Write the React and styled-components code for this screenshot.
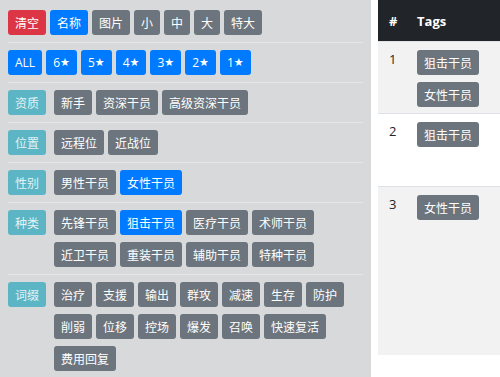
import styled, { createGlobalStyle } from "styled-components"

const GlobalStyle = createGlobalStyle`
    body {
        margin: 0;
        background: #ffffff;
        font-family: "Open Sans", "Noto Sans CJK SC", sans-serif;
    }
`

const filters = [
    { label: null, items: [["清空", "red"], ["名称", "blue"], "图片", "小", "中", "大", "特大"] },
    { label: null, items: [["ALL", "blue"], ["6", "blue", true], ["5", "blue", true], ["4", "blue", true], ["3", "blue", true], ["2", "blue", true], ["1", "blue", true]] },
    { label: "资质", items: ["新手", "资深干员", "高级资深干员"] },
    { label: "位置", items: ["远程位", "近战位"] },
    { label: "性别", items: ["男性干员", ["女性干员", "blue"]] },
    { label: "种类", items: ["先锋干员", ["狙击干员", "blue"], "医疗干员", "术师干员", "近卫干员", "重装干员", "辅助干员", "特种干员"] },
    { label: "词缀", items: ["治疗", "支援", "输出", "群攻", "减速", "生存", "防护", "削弱", "位移", "控场", "爆发", "召唤", "快速复活", "费用回复"] },
]

const results = [
    { id: 1, tags: ["狙击干员", "女性干员"], height: 72, striped: true },
    { id: 2, tags: ["狙击干员"], height: 73, striped: false },
    { id: 3, tags: ["女性干员"], height: 169, striped: true },
]

export default function App() {
    return (
        <>
            <GlobalStyle />
            <Page>
                <Panel>
                    {filters.map((row, i) => (
                        <FilterRow key={i}>
                            {row.label && <Label>{row.label}</Label>}
                            <Buttons>
                                {row.items.map((it) => {
                                    const [text, tone, star] = Array.isArray(it) ? it : [it, "gray"]
                                    return (
                                        <Btn key={text} $tone={tone}>
                                            {text}
                                            {star && <Star>★</Star>}
                                        </Btn>
                                    )
                                })}
                            </Buttons>
                        </FilterRow>
                    ))}
                </Panel>
                <Table>
                    <Head>
                        <NumCell>#</NumCell>
                        <TagCell>Tags</TagCell>
                    </Head>
                    {results.map((r) => (
                        <Row key={r.id} $striped={r.striped} $h={r.height}>
                            <NumCell>{r.id}</NumCell>
                            <TagCell>
                                {r.tags.map((t) => <Btn key={t} $tone="gray">{t}</Btn>)}
                            </TagCell>
                        </Row>
                    ))}
                </Table>
            </Page>
        </>
    )
}

const Page = styled.div`
    display: flex;
    gap: 7px;
    height: 377px;
    overflow: hidden;
`
const Panel = styled.div`
    width: 355px;
    flex: none;
    padding: 3px 8px 0;
    background: #d8d9db;
`
const FilterRow = styled.div`
    display: flex;
    align-items: flex-start;
    gap: 8px;
    padding: 7px 0;
    border-bottom: 1px solid rgba(255, 255, 255, 0.35);
`
const Buttons = styled.div`
    display: flex;
    flex-wrap: wrap;
    gap: 7px 4px;
    flex: 1;
`
const tones = {
    gray: "#6c757d",
    blue: "#007bff",
    red: "#dc3545",
}
const Btn = styled.div`
    display: inline-flex;
    align-items: center;
    justify-content: center;
    height: 25px;
    padding: 0 7px;
    border-radius: 3px;
    background: ${(p) => tones[p.$tone]};
    color: #ffffff;
    font-size: 12px;
    white-space: nowrap;
    box-sizing: border-box;
`
const Star = styled.span`
    font-family: "DejaVu Sans", sans-serif;
    font-size: 11px;
`
const Label = styled(Btn)`
    background: #5bb5c4;
    color: rgba(255, 255, 255, 0.85);
    flex: none;
`
const Table = styled.div`
    flex: 1;
    display: flex;
    flex-direction: column;
    color: #212529;
    font-size: 13px;
`
const Head = styled.div`
    display: flex;
    align-items: center;
    height: 41px;
    background: #212529;
    color: #ffffff;
    font-weight: 700;
    font-size: 13px;
`
const Row = styled.div`
    display: flex;
    height: ${(p) => p.$h}px;
    padding-top: 8px;
    box-sizing: border-box;
    border-top: 1px solid #dee2e6;
    background: ${(p) => (p.$striped ? "#f2f2f2" : "#ffffff")};
`
const NumCell = styled.div`
    width: 28px;
    padding-left: 11px;
    line-height: 18px;
`
const TagCell = styled.div`
    display: flex;
    flex-direction: column;
    align-items: flex-start;
    gap: 7px;
`
